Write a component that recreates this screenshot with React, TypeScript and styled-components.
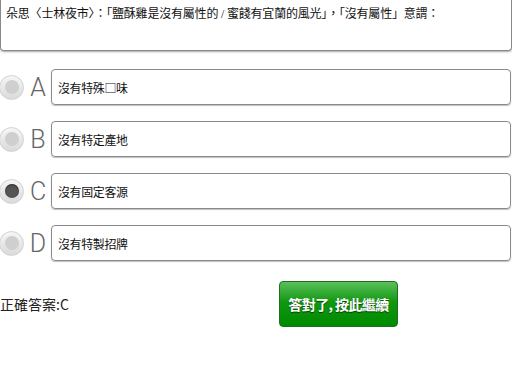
import React from 'react';
import styled, { createGlobalStyle } from 'styled-components';

const GlobalStyle = createGlobalStyle`
  html, body {
    margin: 0;
    padding: 0;
    background: #fff;
  }
  body {
    font-family: 'Liberation Sans', 'Noto Sans CJK TC', sans-serif;
    color: #111;
  }
`;

const Page = styled.div`
  width: 512px;
  height: 384px;
  overflow: hidden;
`;

const Question = styled.div`
  height: 51px;
  box-sizing: border-box;
  padding: 5px 5px 0 5px;
  border: 1px solid #888;
  border-top: none;
  border-radius: 0 0 4px 4px;
  box-shadow: 0 1px 2px rgba(0, 0, 0, 0.35);
  font-family: 'Liberation Serif', 'Noto Sans CJK TC', serif;
  font-size: 12px;
  line-height: 18px;
  letter-spacing: -0.2px;
  color: #111;
`;

const Options = styled.div`
  display: flex;
  flex-direction: column;
  gap: 16px;
  margin-top: 18px;
`;

const OptionRow = styled.div`
  display: flex;
  align-items: center;
  height: 36px;
`;

const Radio = styled.span<{ checked?: boolean }>`
  flex: none;
  width: 25px;
  height: 25px;
  margin-left: -1px;
  border-radius: 50%;
  box-sizing: border-box;
  background: linear-gradient(#f6f6f6, #dadada);
  border: 1px solid #d2d2d2;
  display: flex;
  align-items: center;
  justify-content: center;

  &::after {
    content: '';
    width: 14px;
    height: 14px;
    border-radius: 50%;
    background: ${(p) => (p.checked ? '#555' : '#cfcfcf')};
    box-shadow: ${(p) => (p.checked ? 'inset 0 1px 2px rgba(0,0,0,0.5)' : 'none')};
  }
`;

const Letter = styled.span`
  flex: none;
  width: 26px;
  text-align: center;
  font-family: Roboto, 'Liberation Sans', sans-serif;
  font-weight: 300;
  font-size: 25px;
  color: #666;
  padding-left: 1px;
`;

const Choice = styled.div`
  flex: 1;
  height: 36px;
  box-sizing: border-box;
  border: 1px solid #8a8a8a;
  border-radius: 4px;
  box-shadow: 0 1px 1px rgba(0, 0, 0, 0.25);
  padding: 0 6px;
  display: flex;
  align-items: center;
  font-family: 'Noto Sans CJK TC', sans-serif;
  font-size: 12px;
  letter-spacing: -0.4px;
  color: #111;
  margin-right: 1px;
`;

const Footer = styled.div`
  display: grid;
  grid-template-columns: 279px auto;
  align-items: center;
  margin-top: 20px;
`;

const Answer = styled.div`
  font-family: 'Noto Sans CJK TC', sans-serif;
  font-size: 14px;
  color: #222;
`;

const ContinueButton = styled.button`
  width: 119px;
  height: 46px;
  border: 1px solid #1f6e1f;
  border-radius: 4px;
  background: linear-gradient(#5cbf5c 0%, #109910 45%, #008a00 100%);
  color: #fff;
  font-family: 'Noto Sans CJK TC', sans-serif;
  font-weight: bold;
  font-size: 14px;
  letter-spacing: -0.6px;
  white-space: nowrap;
  text-shadow: 0 1px 1px rgba(0, 0, 0, 0.6);
  padding: 0;
  cursor: pointer;
`;

const choices = [
  { letter: 'A', text: '沒有特殊□味' },
  { letter: 'B', text: '沒有特定產地' },
  { letter: 'C', text: '沒有固定客源', checked: true },
  { letter: 'D', text: '沒有特製招牌' },
];

const App = () => (
  <Page>
    <GlobalStyle />
    <Question>
      朵思〈士林夜市〉：「鹽酥雞是沒有屬性的 / 蜜餞有宜蘭的風光」，「沒有屬性」意謂：
    </Question>
    <Options>
      {choices.map((c) => (
        <OptionRow key={c.letter}>
          <Radio checked={c.checked} />
          <Letter>{c.letter}</Letter>
          <Choice>{c.text}</Choice>
        </OptionRow>
      ))}
    </Options>
    <Footer>
      <Answer>正確答案:C</Answer>
      <ContinueButton>答對了, 按此繼續</ContinueButton>
    </Footer>
  </Page>
);

export default App;
